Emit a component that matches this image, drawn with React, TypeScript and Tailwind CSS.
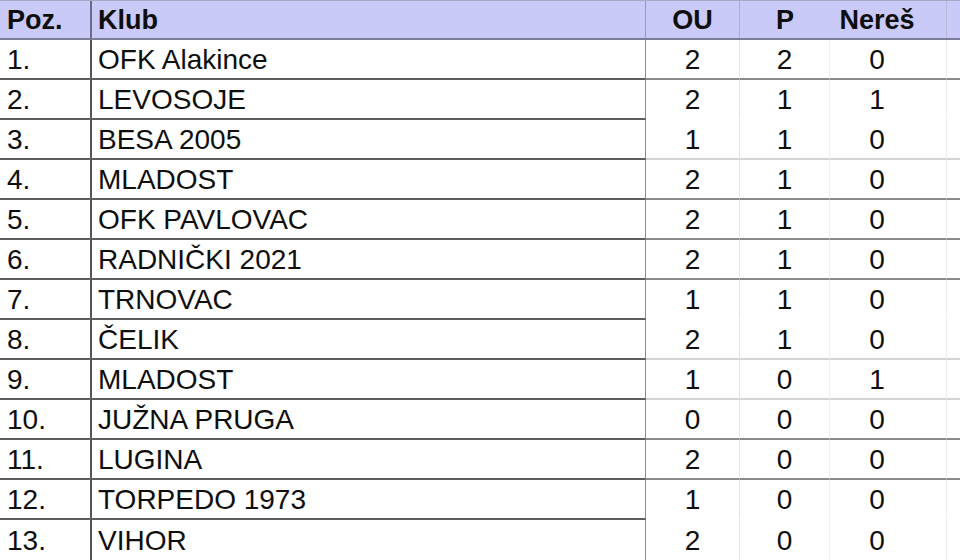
import React from "react";

type Line = "dark" | "light" | "none";

const rows: { pos: string; club: string; ou: string; p: string; n: string; line: Line }[] = [
  { pos: "1.", club: "OFK Alakince", ou: "2", p: "2", n: "0", line: "dark" },
  { pos: "2.", club: "LEVOSOJE", ou: "2", p: "1", n: "1", line: "none" },
  { pos: "3.", club: "BESA 2005", ou: "1", p: "1", n: "0", line: "light" },
  { pos: "4.", club: "MLADOST", ou: "2", p: "1", n: "0", line: "dark" },
  { pos: "5.", club: "OFK PAVLOVAC", ou: "2", p: "1", n: "0", line: "dark" },
  { pos: "6.", club: "RADNIČKI 2021", ou: "2", p: "1", n: "0", line: "dark" },
  { pos: "7.", club: "TRNOVAC", ou: "1", p: "1", n: "0", line: "none" },
  { pos: "8.", club: "ČELIK", ou: "2", p: "1", n: "0", line: "light" },
  { pos: "9.", club: "MLADOST", ou: "1", p: "0", n: "1", line: "light" },
  { pos: "10.", club: "JUŽNA PRUGA", ou: "0", p: "0", n: "0", line: "dark" },
  { pos: "11.", club: "LUGINA", ou: "2", p: "0", n: "0", line: "dark" },
  { pos: "12.", club: "TORPEDO 1973", ou: "1", p: "0", n: "0", line: "none" },
  { pos: "13.", club: "VIHOR", ou: "2", p: "0", n: "0", line: "none" },
];

function numLine(l: Line) {
  if (l === "dark") return "border-b-2 border-b-[#8a8a8a]";
  if (l === "light") return "border-b-2 border-b-[#d4d4d4]";
  return "border-b-2 border-b-transparent";
}

export default function App() {
  return (
    <div
      className="w-[960px] h-[560px] overflow-hidden bg-white text-[#0e0e0e]"
      style={{ fontFamily: '"Liberation Sans", Arial, sans-serif' }}
    >
      {/* Header */}
      <div className="flex h-[40px] bg-[#cacaf8] border-t border-t-[#a8a8c8] border-b-2 border-b-[#7c7c98] font-bold text-[27px] leading-none">
        <div className="w-[92px] shrink-0 flex items-center pl-[7px] pt-[1px] border-r-2 border-r-[#6a6a84]">Poz.</div>
        <div className="w-[554px] shrink-0 flex items-center pl-[6px] pt-[1px] border-r border-r-[#9a9ab8]">Klub</div>
        <div className="w-[94px] shrink-0 flex items-center justify-center pt-[1px] border-r border-r-[#aeaed0]">OU</div>
        <div className="w-[90px] shrink-0 flex items-center justify-center pt-[1px]">P</div>
        <div className="w-[117px] shrink-0 flex items-center justify-center pr-[22px] pt-[1px] border-r border-r-[#b8b8d8]">Nereš</div>
        <div className="flex-1" />
      </div>
      {rows.map((r, i) => {
        const last = i === rows.length - 1;
        const leftB = last ? "" : "border-b-2 border-b-[#5e5e5e]";
        const nl = last ? "" : numLine(r.line);
        return (
          <div key={i} className="flex h-[40px] text-[28px] leading-none">
            <div className={`w-[92px] shrink-0 flex items-center pl-[7px] pt-[2px] border-r-2 border-r-[#555] ${leftB}`}>
              {r.pos}
            </div>
            <div className={`w-[554px] shrink-0 flex items-center pl-[6px] pt-[2px] border-r border-r-[#8c8c8c] ${leftB}`}>
              {r.club}
            </div>
            <div className={`w-[94px] shrink-0 flex items-center justify-center pt-[2px] border-r border-r-[#e2e2e2] ${nl}`}>
              {r.ou}
            </div>
            <div className={`w-[90px] shrink-0 flex items-center justify-center pt-[2px] border-r border-r-[#eeeeee] ${nl}`}>
              {r.p}
            </div>
            <div className={`w-[117px] shrink-0 flex items-center justify-center pr-[22px] pt-[2px] border-r border-r-[#ececec] ${nl}`}>
              {r.n}
            </div>
            <div className={`flex-1 ${nl}`} />
          </div>
        );
      })}
    </div>
  );
}
